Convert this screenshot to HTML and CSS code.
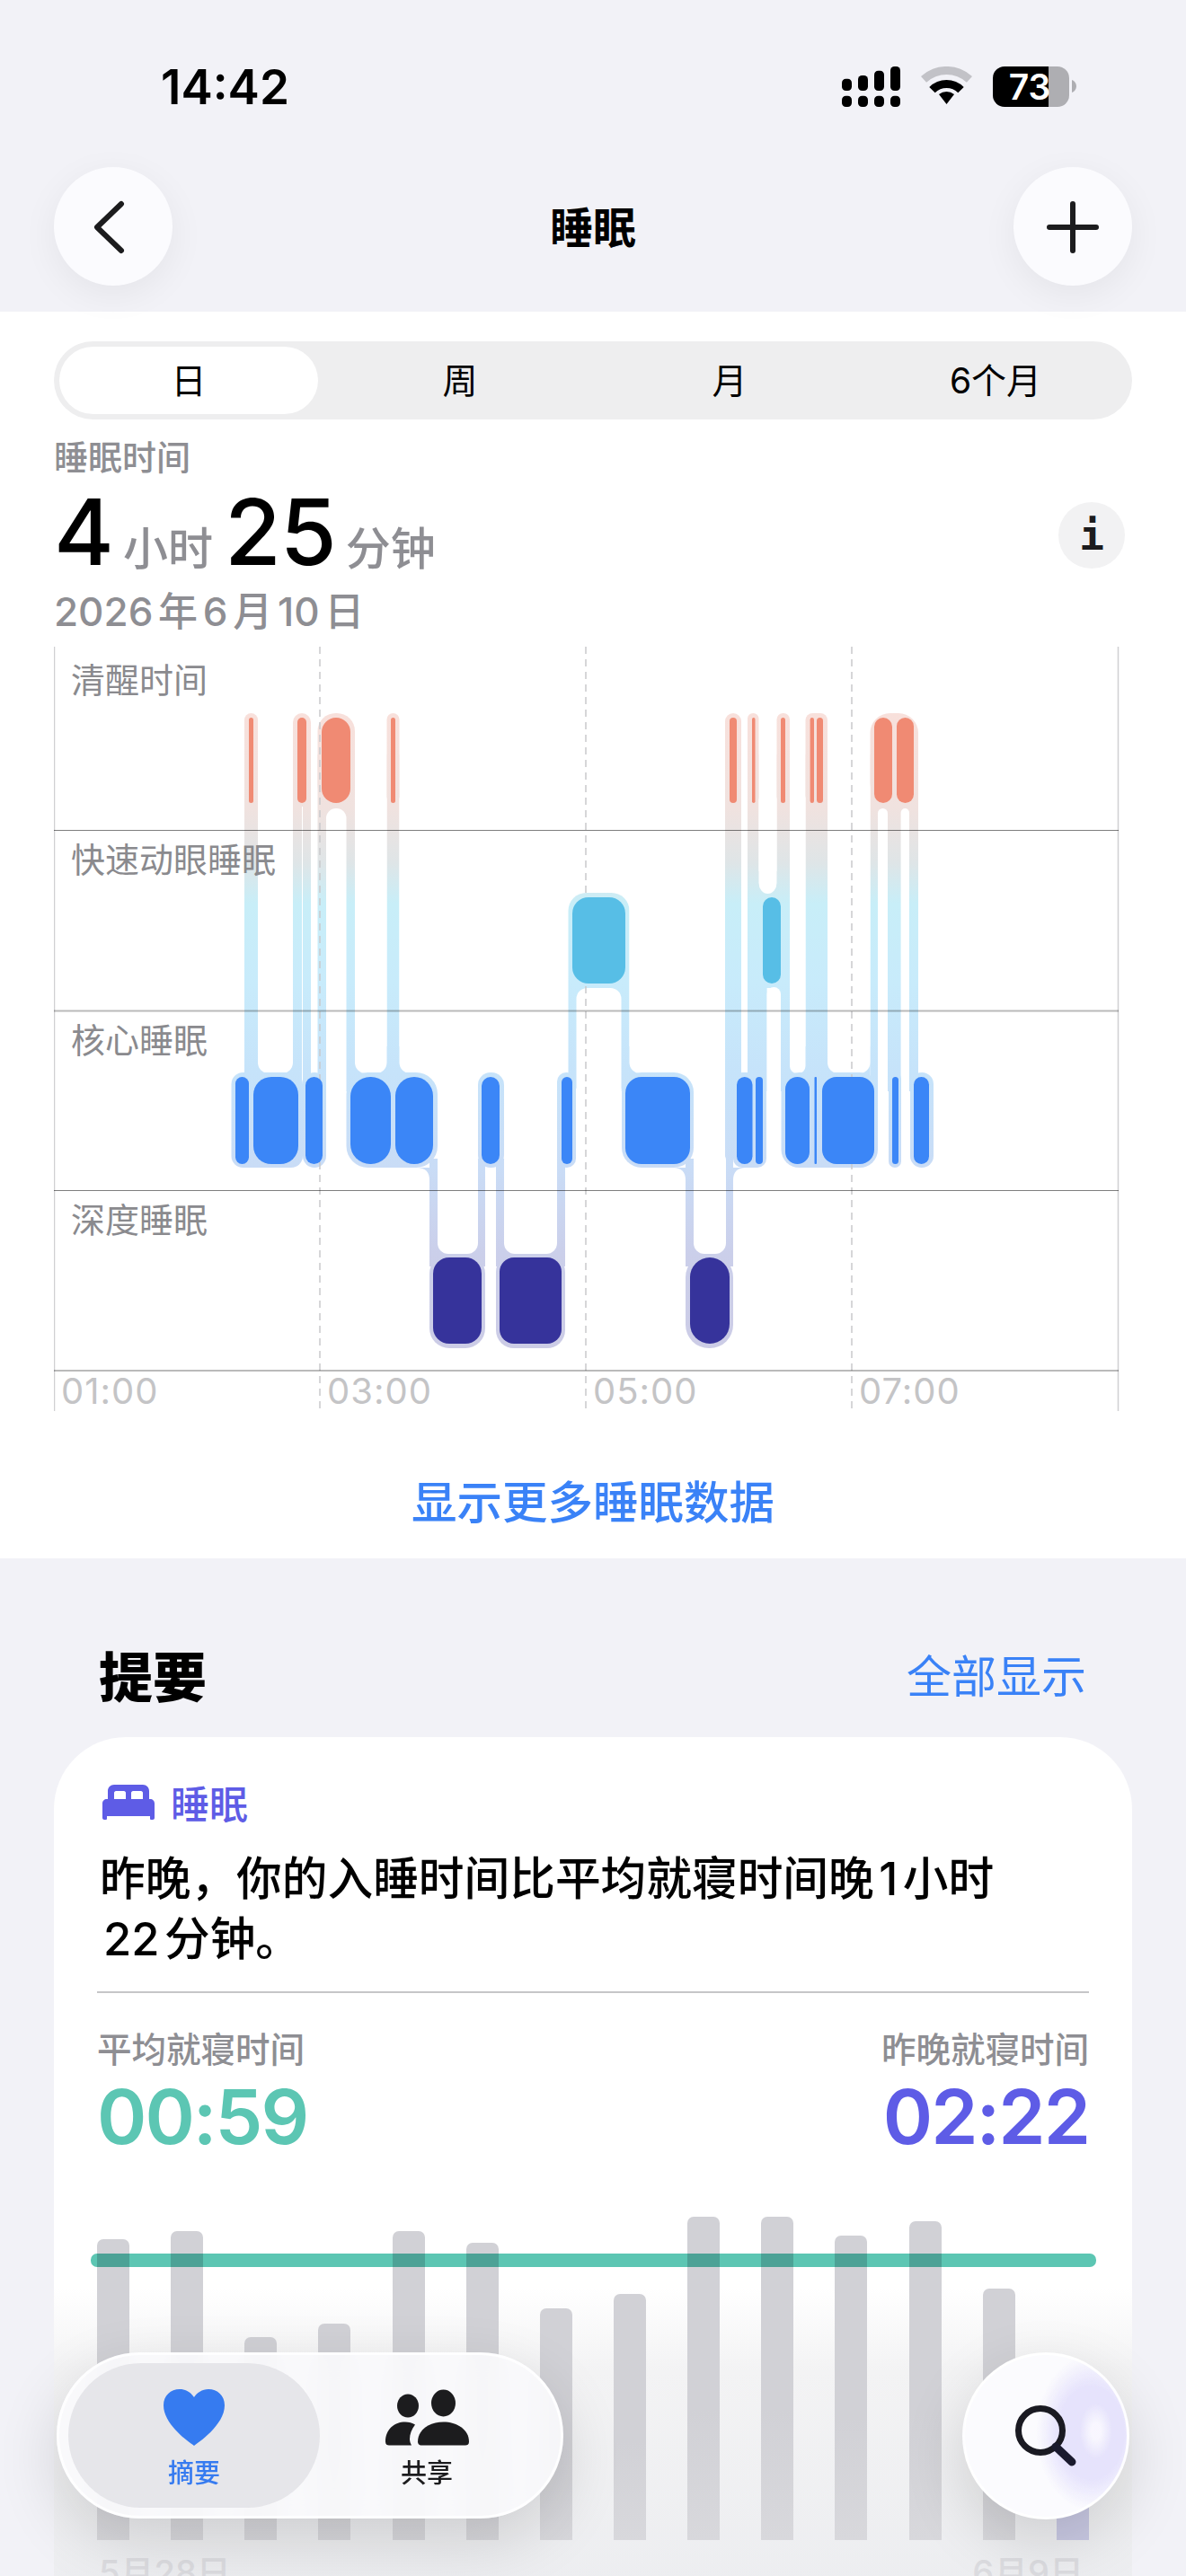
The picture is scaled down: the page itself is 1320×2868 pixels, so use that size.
FILE: index.html
```html
<!DOCTYPE html>
<html lang="zh-CN">
<head>
  <meta charset="utf-8">
  <link rel="stylesheet" href="styles.css">
</head>
<body>
  <div class="screen">
    <div class="status">
      <div class="clock">14:42</div>
      <div class="status-icons">
        <svg width="65" height="45" viewBox="0 0 65 45">
          <rect x="0" y="13.7" width="11" height="13.3" rx="4.5"/>
          <rect x="18" y="10" width="11" height="17" rx="4.5"/>
          <rect x="36" y="4.7" width="11" height="22.3" rx="4.5"/>
          <rect x="54" y="0" width="11" height="27" rx="4.5"/>
          <rect x="0" y="32.7" width="11" height="12.3" rx="4.5"/>
          <rect x="18" y="32.7" width="11" height="12.3" rx="4.5"/>
          <rect x="36" y="32.7" width="11" height="12.3" rx="4.5"/>
          <rect x="54" y="32.7" width="11" height="12.3" rx="4.5"/>
        </svg>
        <svg width="57" height="45" viewBox="0 0 57 45">
          <path fill="#c2c2c7" d="M0 11.1A42 42 0 0 1 57 11.1L50.9 17.7A33 33 0 0 0 6.1 17.7Z"/>
          <path d="M9.3 23A27 27 0 0 1 47.7 23L41.3 29.3A18 18 0 0 0 15.7 29.3Z"/>
          <path d="M20 30.9A14 14 0 0 1 37 30.9L28.5 42Z"/>
        </svg>
        <svg width="93" height="45" viewBox="0 0 93 45">
          <path fill="#aeaeb2" d="M62 0H72A13 13 0 0 1 85 13V32A13 13 0 0 1 72 45H62Z"/>
          <path d="M62 0H13A13 13 0 0 0 0 13V32A13 13 0 0 0 13 45H62Z"/>
          <path fill="#aeaeb2" d="M88 15C91 16 93 19 93 22S91 28 88 29Z"/>
          <text class="battery-text" x="41" y="37" text-anchor="middle">73</text>
        </svg>
      </div>
    </div>

    <div class="nav">
      <div class="round-btn">
        <svg width="132" height="132" viewBox="0 0 132 132">
          <path class="nav-icon" d="M75 41L48 67L75 93"/>
        </svg>
      </div>
      <div class="nav-title">睡眠</div>
      <div class="round-btn">
        <svg width="132" height="132" viewBox="0 0 132 132">
          <path class="nav-icon" d="M66 41V93M40 67H92"/>
        </svg>
      </div>
    </div>

    <div class="day-panel">
      <div class="segments">
        <div class="segment active">日</div>
        <div class="segment">周</div>
        <div class="segment">月</div>
        <div class="segment">6个月</div>
      </div>

      <div class="stats">
        <div class="stats-label">睡眠时间</div>
        <div class="stats-row">
          <span class="stats-num">4</span>
          <span class="stats-unit">小时</span>
          <span class="stats-num">25</span>
          <span class="stats-unit">分钟</span>
          <div class="info-btn">i</div>
        </div>
        <div class="stats-date">2026 年 6 月 10 日</div>
      </div>

      <svg class="sleep-chart" width="1186" height="875" viewBox="60 720 1186 875">
        <defs>
          <linearGradient id="flow" gradientUnits="userSpaceOnUse" x1="0" y1="794" x2="0" y2="1501">
            <stop offset="0" stop-color="#f8e0db"/>
            <stop offset="0.15" stop-color="#f0e2df"/>
            <stop offset="0.235" stop-color="#dfe5e7"/>
            <stop offset="0.3" stop-color="#c8eef8"/>
            <stop offset="0.425" stop-color="#c8ebfb"/>
            <stop offset="0.567" stop-color="#c6e3fa"/>
            <stop offset="0.716" stop-color="#c9dcf6"/>
            <stop offset="0.85" stop-color="#cbcfea"/>
            <stop offset="1" stop-color="#cccce6"/>
          </linearGradient>
        </defs>

        <!-- connectors between the stages -->
        <g fill="url(#flow)">
          <rect x="272" y="840" width="15" height="375"/>
          <rect x="326" y="840" width="20" height="375"/>
          <rect x="353.5" y="840" width="41.5" height="375"/>
          <rect x="430.5" y="840" width="14" height="375"/>
          <rect x="632.5" y="994" width="68" height="221" rx="20"/>
          <rect x="807" y="840" width="18" height="375"/>
          <rect x="807" y="1200" width="9" height="210"/>
          <rect x="832" y="840" width="12.5" height="170"/>
          <rect x="832" y="970" width="47" height="130"/>
          <rect x="832" y="1000" width="21.6" height="215"/>
          <rect x="864.5" y="840" width="14.5" height="375"/>
          <rect x="896.5" y="840" width="24.5" height="375"/>
          <rect x="968.5" y="840" width="53.5" height="375"/>
          <!-- shoulders above the core row -->
          <rect x="272" y="1165" width="74" height="50"/>
          <rect x="385.5" y="1165" width="59" height="50"/>
          <rect x="430.5" y="1165" width="30" height="50"/>
          <rect x="691.5" y="1165" width="40" height="50"/>
          <rect x="807" y="1165" width="46" height="50"/>
          <rect x="869" y="1165" width="52" height="50"/>
          <rect x="896.5" y="1165" width="72" height="50"/>
          <!-- core down to deep -->
          <rect x="478" y="1290" width="62" height="120"/>
          <rect x="552" y="1290" width="77" height="120"/>
          <rect x="763" y="1290" width="53" height="120"/>
        </g>

        <!-- white gaps, their round corners make the flares -->
        <g fill="#fff">
          <rect x="287" y="700" width="39" height="495" rx="12"/>
          <rect x="395" y="700" width="35.5" height="495" rx="12"/>
          <rect x="444.5" y="700" width="175" height="495" rx="12"/>
          <rect x="700.5" y="1000" width="100" height="195" rx="12"/>
          <rect x="825" y="700" width="7" height="497" rx="3.5"/>
          <rect x="844.5" y="700" width="20" height="295" rx="12"/>
          <rect x="879" y="700" width="17.5" height="495" rx="8"/>
          <rect x="921" y="700" width="47.5" height="495" rx="12"/>
          <rect x="336" y="898" width="1" height="320"/>
          <rect x="363" y="900" width="22.5" height="420" rx="11"/>
          <rect x="977" y="900" width="11" height="420" rx="5.5"/>
          <rect x="1002.6" y="900" width="9.4" height="420" rx="4.7"/>
          <rect x="641.5" y="1100" width="50" height="220" rx="12"/>
          <rect x="853.6" y="1099" width="15.4" height="220" rx="8"/>
          <rect x="487" y="1280" width="45" height="116" rx="12"/>
          <rect x="540" y="1280" width="12" height="240"/>
          <rect x="561" y="1280" width="59" height="116" rx="12"/>
          <rect x="772" y="1280" width="36" height="116" rx="12"/>
        </g>

        <!-- halos around the blocks -->
        <g fill="url(#flow)">
          <rect x="272" y="794" width="15" height="100" rx="7.5"/>
          <rect x="326" y="794" width="20" height="104" rx="10"/>
          <rect x="353.5" y="794" width="41.5" height="100" rx="20"/>
          <rect x="430.5" y="794" width="14" height="100" rx="7"/>
          <rect x="807" y="794" width="18" height="100" rx="9"/>
          <rect x="832" y="794" width="12.5" height="100" rx="6"/>
          <rect x="864.5" y="794" width="14.5" height="100" rx="7"/>
          <rect x="896.5" y="794" width="24.5" height="100" rx="8"/>
          <rect x="968.5" y="794" width="53.5" height="100" rx="22"/>

          <rect x="257.5" y="1194" width="79.5" height="106" rx="13"/>
          <rect x="337" y="1194" width="26" height="106" rx="13"/>
          <rect x="385.5" y="1194" width="101.5" height="106" rx="24"/>
          <rect x="532" y="1194" width="29" height="106" rx="14"/>
          <rect x="620" y="1194" width="21" height="106" rx="10"/>
          <rect x="692" y="1194" width="80" height="106" rx="22"/>
          <rect x="816" y="1194" width="37" height="106" rx="10"/>
          <rect x="869.5" y="1194" width="107.5" height="106" rx="20"/>
          <rect x="989" y="1194" width="14" height="106" rx="7"/>
          <rect x="1013" y="1194" width="26" height="106" rx="13"/>

          <rect x="478" y="1396" width="62" height="105" rx="22"/>
          <rect x="552" y="1396" width="77" height="105" rx="20"/>
          <rect x="763" y="1396" width="53" height="105" rx="26"/>

          <path d="M464 1300Q478 1300 478 1314V1300Z"/>
          <path d="M749 1300Q763 1300 763 1314V1300Z"/>
          <path d="M830 1300Q816 1300 816 1314V1300Z"/>
        </g>

        <!-- grid -->
        <g class="grid-dash">
          <line x1="356" y1="720" x2="356" y2="1571"/>
          <line x1="652" y1="720" x2="652" y2="1571"/>
          <line x1="948" y1="720" x2="948" y2="1571"/>
        </g>
        <g class="grid-edge">
          <line x1="60.5" y1="720" x2="60.5" y2="1571"/>
          <line x1="1244.5" y1="720" x2="1244.5" y2="1571"/>
        </g>
        <rect class="grid-strong" x="60" y="924" width="1185" height="1"/>
        <rect class="grid-soft" x="60" y="1124.5" width="1185" height="2"/>
        <rect class="grid-strong" x="60" y="1325" width="1185" height="1"/>
        <rect class="grid-soft" x="60" y="1525" width="1185" height="2"/>

        <g class="awake">
          <rect x="277" y="799" width="5" height="95" rx="2.5"/>
          <rect x="331" y="799" width="10" height="95" rx="5"/>
          <rect x="358" y="799" width="32" height="95" rx="16"/>
          <rect x="435" y="799" width="5" height="95" rx="2.5"/>
          <rect x="812" y="799" width="8" height="95" rx="4"/>
          <rect x="837" y="799" width="3.5" height="95" rx="1.7"/>
          <rect x="869" y="799" width="5" height="95" rx="2.5"/>
          <rect x="901.6" y="799" width="4.4" height="95" rx="2.2"/>
          <rect x="909" y="799" width="7" height="95" rx="3.5"/>
          <rect x="973" y="799" width="20" height="95" rx="10"/>
          <rect x="998" y="799" width="19" height="95" rx="9.5"/>
        </g>
        <g class="rem">
          <rect x="637" y="999" width="59" height="96" rx="18"/>
          <rect x="849" y="999" width="20" height="96" rx="10"/>
        </g>
        <g class="core">
          <rect x="262" y="1199" width="15" height="97" rx="7.5"/>
          <rect x="282" y="1199" width="50" height="97" rx="20"/>
          <rect x="340" y="1199" width="19" height="97" rx="9.5"/>
          <rect x="390" y="1199" width="45" height="97" rx="22"/>
          <rect x="440" y="1199" width="42" height="97" rx="21"/>
          <rect x="536" y="1199" width="20" height="97" rx="10"/>
          <rect x="625" y="1199" width="12" height="97" rx="6"/>
          <rect x="696" y="1199" width="72" height="97" rx="18"/>
          <rect x="820" y="1199" width="17.5" height="97" rx="8.7"/>
          <rect x="841" y="1199" width="8" height="97" rx="4"/>
          <rect x="874" y="1199" width="27" height="97" rx="13.5"/>
          <rect x="906.5" y="1199" width="2.5" height="97" rx="1"/>
          <rect x="915" y="1199" width="58" height="97" rx="16"/>
          <rect x="993" y="1199" width="7" height="97" rx="3.5"/>
          <rect x="1017" y="1199" width="17" height="97" rx="8.5"/>
        </g>
        <g class="deep">
          <rect x="482" y="1400" width="54" height="96" rx="18"/>
          <rect x="556" y="1400" width="69" height="96" rx="16"/>
          <rect x="768" y="1400" width="44" height="96" rx="22"/>
        </g>

        <text class="row-label" x="79" y="771">清醒时间</text>
        <text class="row-label" x="79" y="971">快速动眼睡眠</text>
        <text class="row-label" x="79" y="1172">核心睡眠</text>
        <text class="row-label" x="79" y="1372">深度睡眠</text>
        <text class="time-label" x="68" y="1563">01:00</text>
        <text class="time-label" x="364" y="1563">03:00</text>
        <text class="time-label" x="660" y="1563">05:00</text>
        <text class="time-label" x="956" y="1563">07:00</text>
      </svg>

      <div class="more-link">显示更多睡眠数据</div>
    </div>

    <div class="summary">
      <div class="summary-head">
        <div class="summary-title">提要</div>
        <div class="summary-all">全部显示</div>
      </div>

      <div class="card">
        <div class="card-head">
          <svg width="58" height="39" viewBox="0 0 58 39">
            <path d="M6 16V7C6 3 9 0 13 0H45C49 0 52 3 52 7V16H45V9C45 8 44 7 43 7H34C33 7 32 8 32 9V16H26V9C26 8 25 7 24 7H15C14 7 13 8 13 9V16Z"/>
            <path d="M5 16H53C56 16 58 18 58 21V37C58 38 57 39 56 39H54C53 39 53 38 53 37V35H5V37C5 38 5 39 4 39H2C1 39 0 38 0 37V21C0 18 2 16 5 16Z"/>
          </svg>
          <span>睡眠</span>
        </div>
        <div class="card-text">昨晚，你的入睡时间比平均就寝时间晚 1 小时<br><span class="indent">22 分钟。</span></div>
        <div class="card-line"></div>
        <div class="compare">
          <div>
            <div class="compare-label">平均就寝时间</div>
            <div class="compare-value teal">00:59</div>
          </div>
          <div class="compare-right">
            <div class="compare-label">昨晚就寝时间</div>
            <div class="compare-value purple">02:22</div>
          </div>
        </div>

        <div class="bars">
          <div class="bar" style="height: 335px"></div>
          <div class="bar" style="height: 344px"></div>
          <div class="bar" style="height: 226px"></div>
          <div class="bar" style="height: 241px"></div>
          <div class="bar" style="height: 344px"></div>
          <div class="bar" style="height: 331px"></div>
          <div class="bar" style="height: 258px"></div>
          <div class="bar" style="height: 274px"></div>
          <div class="bar" style="height: 360px"></div>
          <div class="bar" style="height: 360px"></div>
          <div class="bar" style="height: 339px"></div>
          <div class="bar" style="height: 355px"></div>
          <div class="bar" style="height: 280px"></div>
          <div class="bar last" style="height: 150px"></div>
          <div class="goal-line"></div>
        </div>
        <div class="bar-dates">
          <span>5月28日</span>
          <span>6月9日</span>
        </div>
      </div>
    </div>

    <div class="tabbar">
      <div class="tab selected">
        <svg width="68" height="63" viewBox="0 0 68 63">
          <path fill="#367bf0" d="M34 63C30 60 0 40 0 18C0 7 8 0 18 0C25 0 31 4 34 9C37 4 43 0 50 0C60 0 68 7 68 18C68 40 38 60 34 63Z"/>
        </svg>
        <div class="tab-label">摘要</div>
      </div>
      <div class="tab">
        <svg width="93" height="63" viewBox="0 0 93 62">
          <g fill="#1c1c1e">
            <ellipse cx="25" cy="18" rx="12" ry="13"/>
            <ellipse cx="64.5" cy="15" rx="13.5" ry="15"/>
            <path d="M36 58C36 44 50 36 64.5 36C79 36 93 44 93 58C93 61 91 62 89 62H40C38 62 36 61 36 58Z"/>
            <path d="M0 58C0 44 10 36 22 36C26 36 30 37 33 39C29 44 27 50 27 55C27 58 28 60 29 62H4C2 62 0 61 0 58Z"/>
          </g>
        </svg>
        <div class="tab-label">共享</div>
      </div>
    </div>

    <div class="search-btn">
      <svg width="186" height="186" viewBox="0 0 186 186">
        <circle cx="87" cy="87" r="24.5" fill="none" stroke="#1a1a22" stroke-width="7"/>
        <path d="M104 105L122 122" fill="none" stroke="#1a1a2e" stroke-width="9" stroke-linecap="round"/>
      </svg>
    </div>
  </div>
</body>
</html>
```

FILE: styles.css
```css
* {
  box-sizing: border-box;
}

html, body {
  margin: 0;
  padding: 0;
}

body {
  background: #f2f2f7;
  color: #000000;
  font-family: Inter, "Noto Sans CJK SC", sans-serif;
}

.screen {
  position: relative;
  width: 1320px;
  height: 2868px;
  overflow: hidden;
  background: #f2f2f7;
}

/* status bar */
.status {
  display: flex;
  justify-content: space-between;
  height: 186px;
  padding: 70px 122px 0 179px;
}

.clock {
  font-size: 53px;
  font-weight: 600;
  line-height: 54px;
}

.status-icons {
  display: flex;
  gap: 23px;
  margin-top: 4px;
  height: 45px;
}

.battery-text {
  fill: #ffffff;
  font-size: 39px;
  font-weight: 600;
}

/* nav */
.nav {
  display: flex;
  justify-content: space-between;
  height: 161px;
  padding: 0 60px;
}

.round-btn {
  width: 132px;
  height: 132px;
  border-radius: 50%;
  background: #fbfbfe;
  box-shadow: 0 10px 40px rgba(0, 0, 0, 0.06);
}

.nav-icon {
  fill: none;
  stroke: #1c1c1e;
  stroke-width: 6;
  stroke-linecap: round;
  stroke-linejoin: round;
}

.nav-title {
  padding-top: 2px;
  font-size: 48px;
  font-weight: 700;
  line-height: 132px;
}

/* day panel */
.day-panel {
  background: #ffffff;
  height: 1388px;
  padding-top: 33px;
}

.segments {
  display: grid;
  grid-template-columns: 296px 300px 300px 1fr;
  height: 87px;
  margin: 0 60px;
  padding: 6px;
  border-radius: 44px;
  background: #eeeeef;
}

.segment {
  font-size: 39px;
  line-height: 75px;
  text-align: center;
}

.segment.active {
  width: 288px;
  border-radius: 38px;
  background: #ffffff;
}

.stats {
  padding: 17px 68px 0 60px;
}

.stats-label {
  color: #8e8e93;
  font-size: 38px;
  font-weight: 500;
  line-height: 50px;
}

.stats-row {
  display: flex;
  align-items: baseline;
  height: 104px;
  margin-top: 6px;
}

.stats-num {
  font-size: 102px;
  font-weight: 500;
  line-height: 104px;
  letter-spacing: -1px;
}

.stats-unit {
  margin: 0 13px 0 11px;
  color: #8e8e93;
  font-size: 50px;
  font-weight: 500;
}

.info-btn {
  align-self: flex-start;
  width: 74px;
  height: 74px;
  margin: 19px 0 0 auto;
  border-radius: 50%;
  background: #f2f2f3;
  color: #1c1c1e;
  font-family: "DejaVu Sans Mono", monospace;
  font-size: 46px;
  font-weight: 700;
  line-height: 74px;
  text-align: center;
}

.stats-date {
  margin-top: 9px;
  color: #8e8e93;
  font-size: 44px;
  font-weight: 500;
  line-height: 56px;
  word-spacing: -6px;
}

/* sleep chart */
.sleep-chart {
  display: block;
  margin: 11px 0 0 60px;
}

.grid-dash line {
  stroke: #c9c9cb;
  stroke-width: 1.5;
  stroke-dasharray: 8 6;
}

.grid-edge line {
  stroke: #d0d0d2;
  stroke-width: 1.5;
}

.grid-strong {
  fill: rgba(0, 0, 0, 0.5);
}

.grid-soft {
  fill: rgba(0, 0, 0, 0.27);
}

.awake {
  fill: #f08a73;
}

.rem {
  fill: #57bee6;
}

.core {
  fill: #3b86f7;
}

.deep {
  fill: #36339b;
}

.row-label {
  fill: #8a8a8e;
  font-size: 38px;
}

.time-label {
  fill: #c4c4c6;
  font-size: 40px;
  letter-spacing: 1px;
}

.more-link {
  padding-top: 43px;
  color: #3a82f7;
  font-size: 50.5px;
  font-weight: 500;
  line-height: 70px;
  text-align: center;
}

/* summary */
.summary {
  padding: 88px 60px 0;
}

.summary-head {
  display: flex;
  justify-content: space-between;
  align-items: center;
  height: 80px;
  padding: 0 51px 0 50px;
}

.summary-title {
  font-size: 60px;
  font-weight: 900;
}

.summary-all {
  color: #3a82f7;
  font-size: 50px;
}

.card {
  height: 960px;
  margin-top: 31px;
  padding: 47px 48px 0;
  border-radius: 80px 80px 0 0;
  background: linear-gradient(#ffffff 0, #ffffff 613px, #f3f3f4 706px, #ecedf0 100%);
}

.card-head {
  display: flex;
  align-items: center;
  gap: 18px;
  height: 50px;
  padding-left: 6px;
  color: #5e5ce6;
  fill: #5e5ce6;
  font-size: 43px;
  font-weight: 500;
}

.card-text {
  margin-top: 27px;
  padding-left: 3px;
  font-size: 50.7px;
  font-weight: 500;
  line-height: 67px;
  word-spacing: -8px;
}

.indent {
  margin-left: 4px;
}

.card-line {
  height: 2px;
  margin-top: 25px;
  background: #c6c6c8;
}

.compare {
  display: flex;
  justify-content: space-between;
  margin-top: 38px;
}

.compare-right {
  text-align: right;
}

.compare-label {
  color: #8e8e93;
  font-size: 38.5px;
  font-weight: 500;
  line-height: 50px;
}

.compare-value {
  margin-top: 5px;
  font-size: 84px;
  font-weight: 600;
  line-height: 90px;
  letter-spacing: -2px;
}

.teal {
  color: #5cc6b3;
}

.purple {
  color: #5e5ce6;
}

.bars {
  position: relative;
  isolation: isolate;
  display: flex;
  justify-content: space-between;
  align-items: flex-end;
  height: 360px;
  margin-top: 66px;
}

.bar {
  width: 36px;
  border-radius: 7px 7px 0 0;
  background: linear-gradient(#d1d1d6 60%, #d8d8dc);
  mix-blend-mode: multiply;
}

.bar.last {
  background: #c9c9e3;
}

.goal-line {
  position: absolute;
  z-index: -1;
  top: 41px;
  left: -7px;
  right: -8px;
  height: 15px;
  border-radius: 7px;
  background: #5cc6b3;
}

.bar-dates {
  display: flex;
  justify-content: space-between;
  margin-top: 11px;
  padding: 0 6px 0 2px;
  color: #dcdce0;
  font-size: 38px;
  font-weight: 500;
  line-height: 50px;
}

/* floating tab bar */
.tabbar {
  position: absolute;
  left: 63px;
  top: 2619px;
  display: flex;
  width: 564px;
  height: 185px;
  padding: 9px 10px;
  border-radius: 93px;
  border: 3px solid rgba(255, 255, 255, 0.9);
  background: rgba(249, 249, 252, 0.9);
  backdrop-filter: blur(14px);
  box-shadow: 0 24px 70px rgba(0, 0, 0, 0.14);
}

.tab {
  display: flex;
  flex-direction: column;
  align-items: center;
  width: 238px;
  padding-top: 29px;
  color: #1c1c1e;
}

.tab.selected {
  width: 280px;
  border-radius: 81px;
  background: #e6e6ea;
  color: #367bf0;
}

.tab-label {
  margin-top: 14px;
  font-size: 29px;
  font-weight: 500;
  line-height: 34px;
}

.search-btn {
  position: absolute;
  left: 1071px;
  top: 2619px;
  width: 186px;
  height: 186px;
  border-radius: 50%;
  border: 3px solid rgba(255, 255, 255, 0.9);
  background:
    radial-gradient(ellipse 10% 17% at 81% 47%, rgba(250, 249, 255, 0.9) 30%, rgba(250, 249, 255, 0) 100%),
    radial-gradient(ellipse 34% 48% at 78% 48%, #e6e3fc 60%, rgba(236, 233, 253, 0) 100%),
    #fbfbfe;
  box-shadow: 0 24px 70px rgba(0, 0, 0, 0.14);
}

.search-btn svg {
  display: block;
  margin: -3px;
}
```
